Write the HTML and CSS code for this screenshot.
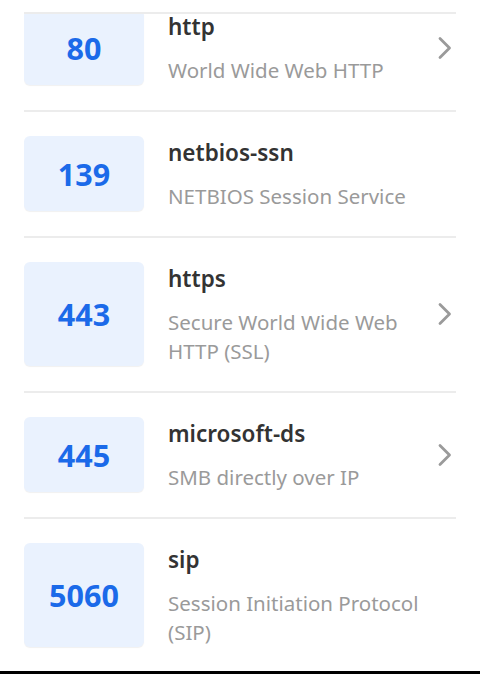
FILE: index.html
```html
<!DOCTYPE html>
<html lang="en">
<head>
<meta charset="utf-8">
<link rel="stylesheet" href="styles.css">
</head>
<body>
<div class="page">
  <div class="viewport">
    <ul class="ports">
      <li class="port first">
        <div class="num">80</div>
        <div class="info">
          <div class="name">http</div>
          <div class="desc">World Wide Web HTTP</div>
        </div>
        <svg class="chev" viewBox="0 0 16 24" width="16" height="24"><path d="M3 2.5 L12.5 12 L3 21.5" fill="none" stroke="#9a9a9a" stroke-width="2.8" stroke-linecap="round" stroke-linejoin="round"/></svg>
      </li>
      <li class="port">
        <div class="num">139</div>
        <div class="info">
          <div class="name">netbios-ssn</div>
          <div class="desc">NETBIOS Session Service</div>
        </div>
      </li>
      <li class="port">
        <div class="num">443</div>
        <div class="info">
          <div class="name">https</div>
          <div class="desc">Secure World Wide Web HTTP (SSL)</div>
        </div>
        <svg class="chev" viewBox="0 0 16 24" width="16" height="24"><path d="M3 2.5 L12.5 12 L3 21.5" fill="none" stroke="#9a9a9a" stroke-width="2.8" stroke-linecap="round" stroke-linejoin="round"/></svg>
      </li>
      <li class="port">
        <div class="num">445</div>
        <div class="info">
          <div class="name">microsoft-ds</div>
          <div class="desc">SMB directly over IP</div>
        </div>
        <svg class="chev" viewBox="0 0 16 24" width="16" height="24"><path d="M3 2.5 L12.5 12 L3 21.5" fill="none" stroke="#9a9a9a" stroke-width="2.8" stroke-linecap="round" stroke-linejoin="round"/></svg>
      </li>
      <li class="port">
        <div class="num">5060</div>
        <div class="info">
          <div class="name">sip</div>
          <div class="desc">Session Initiation Protocol (SIP)</div>
        </div>
      </li>
    </ul>
  </div>
  <div class="bottom-bar"></div>
</div>
</body>
</html>
```
FILE: styles.css
```css
* { box-sizing: border-box; }
html, body {
  margin: 0;
  padding: 0;
  background: #ffffff;
  font-family: "Noto Sans", "Open Sans", sans-serif;
}
.page {
  height: 674px;
  display: flex;
  flex-direction: column;
  padding-top: 12px;
}
.viewport {
  flex: 1;
  margin: 0 24px;
  border-top: 2px solid #ececec;
  overflow: hidden;
}
.ports {
  list-style: none;
  margin: -28px 0 0 0;
  padding: 0;
}
.port {
  display: flex;
  align-items: stretch;
  padding: 24px 0 25px;
  border-bottom: 2px solid #ececec;
}
.num {
  flex: 0 0 120px;
  display: flex;
  align-items: center;
  justify-content: center;
  background: #eaf2fe;
  border-radius: 6px;
  box-shadow: 0 1px 1px rgba(0, 0, 0, 0.06);
  color: #1b6ae9;
  font-size: 30.5px;
  font-weight: 700;
}
.info {
  flex: 1;
  margin-left: 24px;
  min-width: 0;
}
.name {
  font-size: 22.5px;
  font-weight: 600;
  line-height: 34px;
  color: #333333;
  margin-bottom: 12px;
}
.desc {
  font-size: 20.5px;
  line-height: 29px;
  color: #9a9a9a;
}
.chev {
  flex: 0 0 16px;
  align-self: center;
  margin: 0 3px 0 8px;
}
.bottom-bar {
  height: 3px;
  background: #000000;
}
```
